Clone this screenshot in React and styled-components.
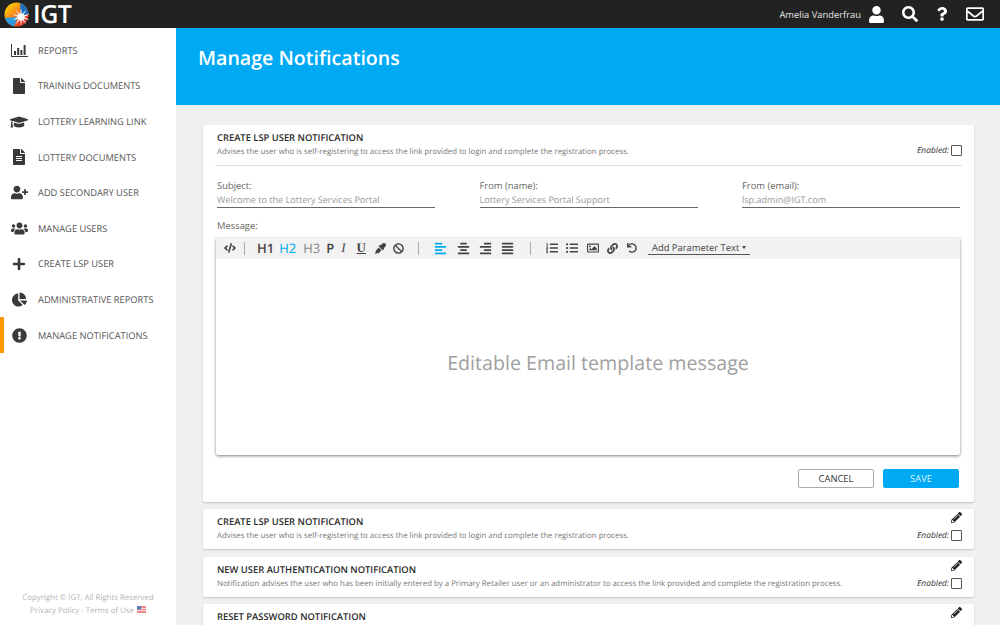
import React from "react"
import styled, { createGlobalStyle } from "styled-components"
import {
  FaAlignCenter,
  FaAlignJustify,
  FaAlignLeft,
  FaAlignRight,
  FaBan,
  FaChartPie,
  FaCode,
  FaExclamationCircle,
  FaEyeDropper,
  FaFile,
  FaFileAlt,
  FaGraduationCap,
  FaLink,
  FaListOl,
  FaListUl,
  FaPencilAlt,
  FaPlus,
  FaQuestion,
  FaRegEnvelope,
  FaRegImage,
  FaSearch,
  FaUndo,
  FaUser,
  FaUserPlus,
  FaUsers,
} from "react-icons/fa"

const blue = "#00a9f4"
const font = `"Open Sans", "Liberation Sans", sans-serif`

const GlobalStyle = createGlobalStyle`
  html, body { margin: 0; height: 100%; overflow: hidden; }
  body {
    font-family: ${font};
    background: #f0f0f0;
    color: #333;
    text-rendering: geometricPrecision;
  }
  #root { height: 100%; }
`

const Page = styled.div`
  display: flex;
  flex-direction: column;
  height: 625px;
  overflow: hidden;
`

const Header = styled.header`
  flex: 0 0 28px;
  height: 28px;
  display: flex;
  align-items: center;
  background: #222222;
  color: #fff;
  padding: 0 16px 0 4px;
`

const Brand = styled.div`
  display: flex;
  align-items: center;
  gap: 4px;
  font-size: 25px;
  line-height: 28px;
  font-weight: 600;
  letter-spacing: -0.5px;
  margin-right: auto;
`

const UserName = styled.span`
  font-size: 9.4px;
  color: #e4e4e4;
  margin-right: 7px;
`

const HeaderIcons = styled.div`
  display: flex;
  align-items: center;
  gap: 17px;
`

const Body = styled.div`
  flex: 1;
  display: flex;
  min-height: 0;
`

const Sidebar = styled.aside`
  flex: 0 0 176px;
  display: flex;
  flex-direction: column;
  background: #fff;
  padding-top: 4.6px;
`

const NavItem = styled.div`
  height: 35.6px;
  flex-shrink: 0;
  display: flex;
  align-items: center;
  gap: 10px;
  padding-left: 10px;
  font-size: 9.3px;
  color: #555;
  box-shadow: ${(props) => (props.$active ? "inset 4px 0 0 #ff9800" : "none")};
`

const NavIcon = styled.span`
  width: 18px;
  display: flex;
  justify-content: center;
  color: #3a3a3a;
  font-size: 16px;
`

const Footer = styled.footer`
  margin-top: auto;
  padding-bottom: 8px;
  text-align: center;
  font-size: 7.85px;
  line-height: 12.5px;
  color: #b5b5b5;
`

const Main = styled.main`
  flex: 1;
  min-width: 0;
  overflow: hidden;
`

const Band = styled.div`
  height: 77px;
  box-sizing: border-box;
  background: ${blue};
  color: #fff;
  padding: 15px 0 0 22px;
  font-size: 19.6px;
  font-weight: 600;
  line-height: 30px;
`

const Content = styled.div`
  display: flex;
  flex-direction: column;
  gap: 7.5px;
  padding: 20px 26px 0 27px;
`

const Card = styled.section`
  box-sizing: border-box;
  flex-shrink: 0;
  background: #fff;
  border-radius: 2px;
  box-shadow: 0 1px 2px rgba(0, 0, 0, 0.2);
  padding: ${(props) => (props.$open ? "6px 14px 12px 13px" : "6px 12px 0 14px")};
  height: ${(props) => (props.$open ? "376.5px" : "40px")};
`

const CardHead = styled.div`
  display: flex;
  justify-content: space-between;
  align-items: flex-start;
  border-bottom: ${(props) => (props.$rule ? "1px solid #ddd" : "none")};
  height: ${(props) => (props.$rule ? "34px" : "auto")};
  margin: ${(props) => (props.$rule ? "0 -2px 0 -1px" : "0")};
  padding-left: ${(props) => (props.$rule ? "2px" : "0")};
`

const Title = styled.div`
  font-size: 9.4px;
  font-weight: 600;
  line-height: 14px;
  color: #2b2b2b;
`

const Desc = styled.div`
  font-size: 7.83px;
  line-height: 15px;
  color: #777;
`

const EnabledBox = styled.div`
  display: flex;
  flex-direction: column;
  align-items: flex-end;
  gap: 7px;
  margin-top: ${(props) => (props.$open ? "14px" : "-3px")};
`

const EnabledRow = styled.label`
  display: flex;
  align-items: center;
  gap: 2px;
  font-size: 8.4px;
  font-style: italic;
  color: #333;
`

const Check = styled.span`
  width: 9px;
  height: 9px;
  border: 1px solid #555;
  border-radius: 1px;
`

const Fields = styled.div`
  display: grid;
  grid-template-columns: repeat(3, 218px);
  justify-content: space-between;
  margin-top: 13px;
  padding-left: 1px;
`

const FieldLabel = styled.div`
  font-size: 9.4px;
  line-height: 14px;
  color: #666;
`

const FieldValue = styled.div`
  font-size: 9.05px;
  line-height: 14px;
  color: #999;
  border-bottom: 1px solid #666;
`

const MessageLabel = styled(FieldLabel)`
  margin: 11px 0 5px 1px;
`

const Editor = styled.div`
  height: 217px;
  display: flex;
  flex-direction: column;
  box-shadow: 0 1px 3px rgba(0, 0, 0, 0.5);
  border-radius: 2px;
  background: #fff;
`

const Toolbar = styled.div`
  height: 21px;
  box-sizing: border-box;
  display: flex;
  align-items: center;
  background: #f2f2f2;
  padding: 0 0 1px 8px;
  color: #444;
  font-size: 11px;
`

const Tool = styled.span`
  display: flex;
  align-items: center;
  justify-content: center;
  margin-left: ${(props) => props.$gap || 0}px;
  color: ${(props) => props.$color || "#444"};
`

const Heading = styled.span`
  font-size: 13px;
  font-weight: ${(props) => props.$weight || 600};
  color: ${(props) => props.$color || "#444"};
  margin-left: ${(props) => props.$gap || 0}px;
`

const Letter = styled.span`
  font-family: "Liberation Serif", serif;
  font-size: 13px;
  font-weight: ${(props) => (props.$italic ? 400 : 700)};
  font-style: ${(props) => (props.$italic ? "italic" : "normal")};
  text-decoration: ${(props) => (props.$under ? "underline" : "none")};
  margin-left: ${(props) => props.$gap || 0}px;
  color: #444;
`

const ToolDivider = styled.span`
  width: 1px;
  height: 13px;
  background: #aaa;
  margin-left: ${(props) => props.$gap}px;
`

const ParamSelect = styled.div`
  width: 102px;
  box-sizing: border-box;
  margin-left: 11px;
  display: flex;
  justify-content: space-between;
  align-items: center;
  padding: 0 4px;
  font-size: 9.4px;
  line-height: 12px;
  color: #444;
  border-bottom: 1px solid #555;
`

const Caret = styled.span`
  width: 0;
  height: 0;
  border-left: 2px solid transparent;
  border-right: 2px solid transparent;
  border-top: 3px solid #444;
`

const EditArea = styled.div`
  flex: 1;
  display: flex;
  align-items: center;
  justify-content: center;
  font-size: 19.65px;
  font-weight: 400;
  color: #a0a0a0;
  padding: 10px 0 0 20px;
`

const Actions = styled.div`
  display: flex;
  justify-content: flex-end;
  gap: 9px;
  margin: 14px 1px 0 0;
`

const Button = styled.button`
  width: 76px;
  height: 19px;
  box-sizing: border-box;
  padding: 0;
  font-family: ${font};
  font-size: 9.4px;
  border-radius: 2px;
  border: 1px solid ${(props) => (props.$primary ? blue : "#aaa")};
  background: ${(props) => (props.$primary ? blue : "#fff")};
  color: ${(props) => (props.$primary ? "#d9f3ff" : "#333")};
`

const LOGO_RAYS = [0, 36, 72, 108, 144, 180, 216, 252, 288, 324]

const Logo = () => (
  <svg width="25" height="25" viewBox="0 0 25 25">
    <defs>
      <linearGradient id="logoGrad" x1="0.1" y1="0.1" x2="0.9" y2="0.9">
        <stop offset="0" stopColor="#ffd400" />
        <stop offset="0.5" stopColor="#f47a20" />
        <stop offset="1" stopColor="#e8371e" />
      </linearGradient>
    </defs>
    <circle cx="12.5" cy="12.5" r="12" fill="url(#logoGrad)" />
    <path d="M1 16 A12 12 0 0 0 10 24.3 L14 15 Z" fill="#2a9be0" />
    <path d="M16 1 A12 12 0 0 1 24.5 12 L17 14 Z" fill="#1b6fc0" />
    <path d="M24.5 14 A12 12 0 0 1 13 24.5 L16 15 Z" fill="#e63a24" />
    {LOGO_RAYS.map((angle) => (
      <path
        key={angle}
        d="M15.8 15 L17 6 L18.2 15 Z"
        fill="#fff"
        transform={`rotate(${angle} 17 15)`}
      />
    ))}
    <circle cx="17" cy="15" r="3" fill="#fff" />
  </svg>
)

const BarsIcon = () => (
  <svg width="17" height="13" viewBox="0 0 17 13" fill="#3a3a3a">
    <path d="M0 0h1v12h16v1H0z" />
    <rect x="3" y="7" width="2" height="4" />
    <rect x="6.2" y="4" width="2" height="7" />
    <rect x="9.4" y="6" width="2" height="5" />
    <rect x="12.6" y="1" width="2" height="10" />
  </svg>
)

const FlagIcon = () => (
  <svg width="9" height="7" viewBox="0 0 9 7" style={{ marginLeft: 3, verticalAlign: -0.5 }}>
    <rect width="9" height="7" fill="#e88a8a" />
    <rect y="2" width="9" height="1" fill="#f7dcdc" />
    <rect y="4" width="9" height="1" fill="#f7dcdc" />
    <rect width="4" height="3.5" fill="#5a7fc0" />
  </svg>
)

const NAV = [
  { label: "REPORTS", icon: <BarsIcon /> },
  { label: "TRAINING DOCUMENTS", icon: <FaFile /> },
  { label: "LOTTERY LEARNING LINK", icon: <FaGraduationCap size={20} /> },
  { label: "LOTTERY DOCUMENTS", icon: <FaFileAlt /> },
  { label: "ADD SECONDARY USER", icon: <FaUserPlus size={17} /> },
  { label: "MANAGE USERS", icon: <FaUsers size={17} /> },
  { label: "CREATE LSP USER", icon: <FaPlus size={14} /> },
  { label: "ADMINISTRATIVE REPORTS", icon: <FaChartPie size={15} /> },
  { label: "MANAGE NOTIFICATIONS", icon: <FaExclamationCircle size={15} />, active: true },
]

const COLLAPSED = [
  {
    title: "CREATE LSP USER NOTIFICATION",
    desc: "Advises the user who is self-registering to access the link provided to login and complete the registration process.",
  },
  {
    title: "NEW USER AUTHENTICATION NOTIFICATION",
    desc: "Notification advises the user who has been initially entered by a Primary Retailer user or an administrator to access the link provided and complete the registration process.",
  },
  { title: "RESET PASSWORD NOTIFICATION", desc: "" },
]

const Enabled = () => (
  <EnabledRow>
    Enabled: <Check />
  </EnabledRow>
)

const EditorToolbar = () => (
  <Toolbar>
    <Tool><FaCode size={12} /></Tool>
    <ToolDivider $gap={8} />
    <Heading $gap={12}>H1</Heading>
    <Heading $gap={5} $weight={500} $color={blue}>H2</Heading>
    <Heading $gap={7} $weight={400} $color="#888">H3</Heading>
    <Heading $gap={6}>P</Heading>
    <Letter $gap={7} $italic>I</Letter>
    <Letter $gap={11} $under>U</Letter>
    <Tool $gap={9}><FaEyeDropper size={11} /></Tool>
    <Tool $gap={7}><FaBan size={11} /></Tool>
    <ToolDivider $gap={14} />
    <Tool $gap={15} $color={blue}><FaAlignLeft size={13} /></Tool>
    <Tool $gap={10}><FaAlignCenter size={13} /></Tool>
    <Tool $gap={9}><FaAlignRight size={13} /></Tool>
    <Tool $gap={9}><FaAlignJustify size={13} /></Tool>
    <ToolDivider $gap={16} />
    <Tool $gap={15}><FaListOl size={12} /></Tool>
    <Tool $gap={8}><FaListUl size={12} /></Tool>
    <Tool $gap={9}><FaRegImage size={12} /></Tool>
    <Tool $gap={8}><FaLink size={11} /></Tool>
    <Tool $gap={9}><FaUndo size={10} /></Tool>
    <ParamSelect>
      Add Parameter Text <Caret />
    </ParamSelect>
  </Toolbar>
)

export default function App() {
  return (
    <Page>
      <GlobalStyle />
      <Header>
        <Brand>
          <Logo />
          IGT
        </Brand>
        <UserName>Amelia Vanderfrau</UserName>
        <HeaderIcons>
          <FaUser size={17} />
          <FaSearch size={16} />
          <FaQuestion size={14} />
          <FaRegEnvelope size={18} />
        </HeaderIcons>
      </Header>
      <Body>
        <Sidebar>
          {NAV.map((item) => (
            <NavItem key={item.label} $active={item.active}>
              <NavIcon>{item.icon}</NavIcon>
              {item.label}
            </NavItem>
          ))}
          <Footer>
            Copyright © IGT, All Rights Reserved
            <br />
            Privacy Policy - Terms of Use
            <FlagIcon />
          </Footer>
        </Sidebar>
        <Main>
          <Band>Manage Notifications</Band>
          <Content>
            <Card $open>
              <CardHead $rule>
                <div>
                  <Title>CREATE LSP USER NOTIFICATION</Title>
                  <Desc>
                    Advises the user who is self-registering to access the link provided to login and complete the registration process.
                  </Desc>
                </div>
                <EnabledBox $open>
                  <Enabled />
                </EnabledBox>
              </CardHead>
              <Fields>
                <div>
                  <FieldLabel>Subject:</FieldLabel>
                  <FieldValue>Welcome to the Lottery Services Portal</FieldValue>
                </div>
                <div>
                  <FieldLabel>From (name):</FieldLabel>
                  <FieldValue>Lottery Services Portal Support</FieldValue>
                </div>
                <div>
                  <FieldLabel>From (email):</FieldLabel>
                  <FieldValue>lsp.admin@IGT.com</FieldValue>
                </div>
              </Fields>
              <MessageLabel>Message:</MessageLabel>
              <Editor>
                <EditorToolbar />
                <EditArea>Editable Email template message</EditArea>
              </Editor>
              <Actions>
                <Button>CANCEL</Button>
                <Button $primary>SAVE</Button>
              </Actions>
            </Card>
            {COLLAPSED.map((card) => (
              <Card key={card.title}>
                <CardHead>
                  <div>
                    <Title>{card.title}</Title>
                    <Desc>{card.desc}</Desc>
                  </div>
                  <EnabledBox>
                    <FaPencilAlt size={11} color="#222" />
                    <Enabled />
                  </EnabledBox>
                </CardHead>
              </Card>
            ))}
          </Content>
        </Main>
      </Body>
    </Page>
  )
}
